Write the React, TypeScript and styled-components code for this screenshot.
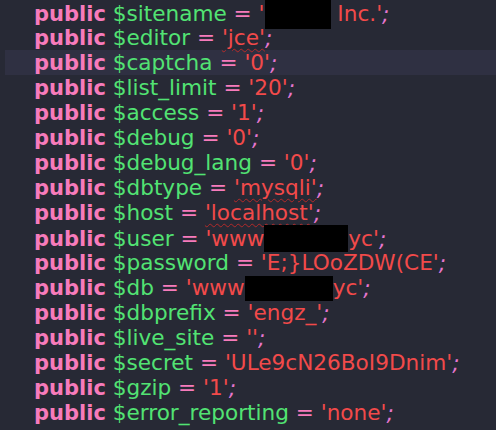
import React from "react";
import styled, { createGlobalStyle } from "styled-components";

const Global = createGlobalStyle`
  html, body { margin: 0; padding: 0; background: #272935; }
  body { width: 496px; height: 430px; overflow: hidden; }
`;

const Editor = styled.div`
  background: #272935;
  width: 496px;
  height: 430px;
  overflow: hidden;
  font-family: "DejaVu Sans", Verdana, sans-serif;
  font-size: 21.6px;
`;

const Line = styled.div<{ $active?: boolean }>`
  height: 25px;
  line-height: 25px;
  white-space: pre;
  margin-left: 5px;
  padding-left: 29px;
  background: ${(p) => (p.$active ? "#2f3042" : "transparent")};
`;

const Kw = styled.span`
  color: #f77bbb;
  font-weight: bold;
  font-size: 21px;
`;

const Var = styled.span`
  color: #52e373;
`;

const Op = styled.span`
  color: #f77bbb;
`;

const Str = styled.span<{ $squiggle?: boolean }>`
  color: #f24a4a;
  text-decoration: ${(p) => (p.$squiggle ? "underline wavy #b32a2a" : "none")};
  text-decoration-thickness: 1px;
  text-underline-offset: 3px;
`;

const Semi = styled.span`
  color: #e576cf;
  font-style: italic;
`;

const Redact = styled.span<{ $w: number; $h: number; $shift: number }>`
  display: inline-block;
  width: ${(p) => p.$w}px;
  height: ${(p) => p.$h}px;
  background: #000;
  vertical-align: ${(p) => p.$shift}px;
`;

type Row = {
  name: string;
  value: React.ReactNode;
  squiggle?: boolean;
  active?: boolean;
};

const rows: Row[] = [
  {
    name: "$sitename",
    value: (
      <>
        '<Redact $w={66} $h={29} $shift={-8} /> Inc.'
      </>
    ),
  },
  { name: "$editor", value: "'jce'", squiggle: true },
  { name: "$captcha", value: "'0'", active: true },
  { name: "$list_limit", value: "'20'" },
  { name: "$access", value: "'1'" },
  { name: "$debug", value: "'0'" },
  { name: "$debug_lang", value: "'0'" },
  { name: "$dbtype", value: "'mysqli'", squiggle: true },
  { name: "$host", value: "'localhost'", squiggle: true },
  {
    name: "$user",
    value: (
      <>
        'www<Redact $w={84} $h={27} $shift={-6} />yc'
      </>
    ),
  },
  { name: "$password", value: "'E;}LOoZDW(CE'" },
  {
    name: "$db",
    value: (
      <>
        'www<Redact $w={88} $h={25} $shift={-6} />yc'
      </>
    ),
  },
  { name: "$dbprefix", value: "'engz_'" },
  { name: "$live_site", value: "''" },
  { name: "$secret", value: "'ULe9cN26BoI9Dnim'" },
  { name: "$gzip", value: "'1'" },
  { name: "$error_reporting", value: "'none'" },
];

export default function App() {
  return (
    <>
      <Global />
      <Editor>
        {rows.map((r) => (
          <Line key={r.name} $active={r.active}>
            <Kw>public</Kw> <Var>{r.name}</Var> <Op>=</Op>{" "}
            <Str $squiggle={r.squiggle}>{r.value}</Str>
            <Semi>;</Semi>
          </Line>
        ))}
      </Editor>
    </>
  );
}
